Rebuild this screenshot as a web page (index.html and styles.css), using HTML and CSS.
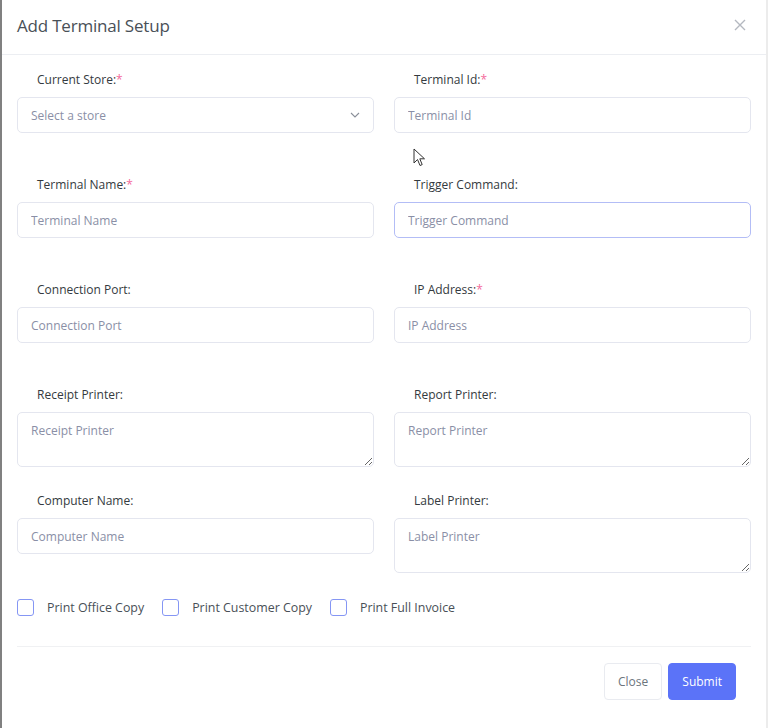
FILE: index.html
```html
<!DOCTYPE html>
<html lang="en">
<head>
<meta charset="utf-8">
<title>Add Terminal Setup</title>
<link rel="stylesheet" href="styles.css">
</head>
<body>
<div class="modal">
  <div class="modal-header">
    <h5 class="modal-title">Add Terminal Setup</h5>
    <button class="btn-close" aria-label="Close">
      <svg width="12" height="12" viewBox="0 0 12 12"><path d="M1 1L11 11M11 1L1 11" stroke="#b4b8c0" stroke-width="1.4" fill="none"/></svg>
    </button>
  </div>
  <div class="modal-body">
    <div class="grid">
      <div class="field gap-lg">
        <label class="lbl">Current Store:<span class="req">*</span></label>
        <div class="select">
          <span class="ph">Select a store</span>
          <svg width="10" height="6" viewBox="0 0 10 6"><path d="M1 1L5 5L9 1" stroke="#8a8f99" stroke-width="1.1" fill="none"/></svg>
        </div>
      </div>
      <div class="field gap-lg">
        <label class="lbl">Terminal Id:<span class="req">*</span></label>
        <input class="input" placeholder="Terminal Id">
      </div>

      <div class="field gap-lg">
        <label class="lbl">Terminal Name:<span class="req">*</span></label>
        <input class="input" placeholder="Terminal Name">
      </div>
      <div class="field gap-lg">
        <label class="lbl">Trigger Command:</label>
        <input class="input focused" placeholder="Trigger Command">
      </div>

      <div class="field gap-lg">
        <label class="lbl">Connection Port:</label>
        <input class="input" placeholder="Connection Port">
      </div>
      <div class="field gap-lg">
        <label class="lbl">IP Address:<span class="req">*</span></label>
        <input class="input" placeholder="IP Address">
      </div>

      <div class="field gap-sm">
        <label class="lbl">Receipt Printer:</label>
        <textarea class="input area" placeholder="Receipt Printer"></textarea>
      </div>
      <div class="field gap-sm">
        <label class="lbl">Report Printer:</label>
        <textarea class="input area" placeholder="Report Printer"></textarea>
      </div>

      <div class="field gap-sm">
        <label class="lbl">Computer Name:</label>
        <input class="input" placeholder="Computer Name">
      </div>
      <div class="field gap-sm">
        <label class="lbl">Label Printer:</label>
        <textarea class="input area" placeholder="Label Printer"></textarea>
      </div>
    </div>

    <div class="checks">
      <label class="check"><span class="box"></span>Print Office Copy</label>
      <label class="check"><span class="box"></span>Print Customer Copy</label>
      <label class="check"><span class="box"></span>Print Full Invoice</label>
    </div>

    <div class="footer">
      <button class="btn btn-light">Close</button>
      <button class="btn btn-primary">Submit</button>
    </div>
  </div>
  <svg class="cursor" width="14" height="20" viewBox="0 0 14 20"><path d="M1 1L1 15L4.5 11.5L7 17.5L9.2 16.6L6.8 10.8L11.5 10.8Z" fill="#fff" stroke="#333" stroke-width="1"/></svg>
</div>
</body>
</html>
```
FILE: styles.css
```css
* { box-sizing: border-box; }
html, body { margin: 0; padding: 0; }
body {
  width: 768px;
  height: 728px;
  background: #fff;
  font-family: "Open Sans", "Liberation Sans", sans-serif;
  color: #343a40;
  overflow: hidden;
}
.modal {
  position: relative;
  width: 768px;
  height: 728px;
  background: #fff;
  border-left: 2px solid #808080;
  border-right: 2px solid #ececec;
}
.modal-header {
  height: 55px;
  display: flex;
  align-items: center;
  justify-content: space-between;
  padding: 0 19px 4px 15px;
  border-bottom: 1px solid #eceef2;
}
.modal-title {
  margin: 0;
  font-size: 17px;
  font-weight: 400;
  color: #495057;
  letter-spacing: -0.2px;
}
.btn-close {
  border: 0;
  background: none;
  padding: 0;
  width: 14px;
  height: 14px;
  display: flex;
  align-items: center;
  justify-content: center;
}
.modal-body {
  padding: 16px 15px 0 15px;
}
.grid {
  display: grid;
  grid-template-columns: 1fr 1fr;
  column-gap: 20px;
}
.field { display: flex; flex-direction: column; }
.gap-lg { margin-bottom: 43px; }
.gap-sm { margin-bottom: 25px; }
.lbl {
  font-size: 12px;
  line-height: 18px;
  padding-left: 20px;
  margin-bottom: 8px;
  color: #343a40;
}
.req { color: #f46a9b; }
.input, .select {
  height: 36px;
  width: 100%;
  border: 1px solid #e4e6ef;
  border-radius: 5px;
  padding: 0 13px;
  font-family: inherit;
  font-size: 12px;
  color: #495057;
  background: #fff;
  outline: none;
}
.input::placeholder { color: #8a8fa6; }
.focused { border-color: #b3bdf6; }
.select {
  display: flex;
  align-items: center;
  justify-content: space-between;
  padding-right: 13px;
}
.ph { color: #8a8fa6; }
.area {
  height: 55px;
  padding-top: 9px;
  resize: vertical;
}
.checks {
  display: flex;
  align-items: center;
  height: 18px;
}
.check {
  display: flex;
  align-items: center;
  font-size: 12.4px;
  color: #495057;
  margin-right: 18px;
}
.box {
  width: 17px;
  height: 17px;
  border: 1px solid #8596f4;
  border-radius: 3px;
  margin-right: 13px;
}
.footer {
  margin-top: 30px;
  border-top: 1px solid #f0f1f3;
  padding-top: 16px;
  display: flex;
  justify-content: flex-end;
  gap: 6px;
  padding-right: 15px;
}
.btn {
  height: 37px;
  border-radius: 4px;
  font-family: inherit;
  font-size: 12px;
  padding: 0 13px;
}
.btn-light {
  background: #fff;
  border: 1px solid #e9ebf0;
  color: #6c757d;
}
.btn-primary {
  background: #5b73f8;
  border: 1px solid #5b73f8;
  color: #fff;
}
.cursor {
  position: absolute;
  left: 411px;
  top: 148px;
}
```
